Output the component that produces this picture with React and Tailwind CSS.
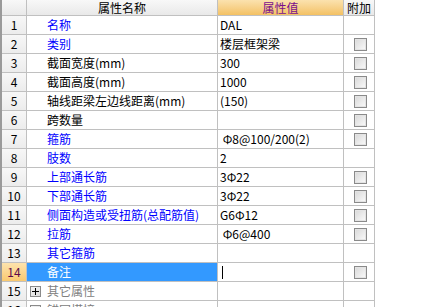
import React from "react";

const rows = [
  { n: "1", name: "名称", c: "blue", v: "DAL", cb: false },
  { n: "2", name: "类别", c: "blue", v: "楼层框架梁", cb: true },
  { n: "3", name: "截面宽度(mm)", c: "black", v: "300", cb: true },
  { n: "4", name: "截面高度(mm)", c: "black", v: "1000", cb: true },
  { n: "5", name: "轴线距梁左边线距离(mm)", c: "black", v: "(150)", cb: true },
  { n: "6", name: "跨数量", c: "black", v: "", cb: true },
  { n: "7", name: "箍筋", c: "blue", v: " Φ8@100/200(2)", cb: true },
  { n: "8", name: "肢数", c: "blue", v: "2", cb: false },
  { n: "9", name: "上部通长筋", c: "blue", v: "3Φ22", cb: true },
  { n: "10", name: "下部通长筋", c: "blue", v: "3Φ22", cb: true },
  { n: "11", name: "侧面构造或受扭筋(总配筋值)", c: "blue", v: "G6Φ12", cb: true },
  { n: "12", name: "拉筋", c: "blue", v: " Φ6@400", cb: true },
  { n: "13", name: "其它箍筋", c: "blue", v: "", cb: false },
  { n: "14", name: "备注", c: "sel", v: "", cb: true, sel: true },
  { n: "15", name: "其它属性", c: "gray", v: "", cb: false, exp: true },
  { n: "16", name: "锚固搭接", c: "gray", v: "", cb: false, exp: true },
];

function Checkbox() {
  return (
    <div className="w-[13px] h-[13px] border border-[#8a8a8a] bg-gradient-to-br from-[#d8d8d8] to-[#fbfbfb] shadow-[inset_0_0_0_1px_#e4e4e4]" />
  );
}

function Expander() {
  return (
    <div className="w-[11px] h-[11px] border border-[#8a8a8a] bg-gradient-to-br from-[#f4f4f4] to-[#dcdcdc] flex items-center justify-center">
      <div className="relative w-[7px] h-[7px]">
        <div className="absolute left-0 top-[3px] w-[7px] h-[1px] bg-black" />
        <div className="absolute left-[3px] top-0 w-[1px] h-[7px] bg-black" />
      </div>
    </div>
  );
}

export default function App() {
  return (
    <div
      className="w-[421px] h-[307px] overflow-hidden bg-white text-[12px] leading-none text-black"
      style={{ fontFamily: '"Noto Sans CJK SC", "DejaVu Sans", sans-serif' }}
    >
      <div className="w-[375px] border-l-2 border-[#9a9a9a]">
        {/* header */}
        <div className="flex h-[16px]">
          <div className="w-[25px] h-full border-r border-b border-[#c0c0c0] bg-gradient-to-b from-[#f8f8f8] to-[#e9e9e9]" />
          <div className="w-[191px] h-full border-r border-b border-[#c0c0c0] bg-gradient-to-b from-[#f8f8f8] to-[#e9e9e9] flex items-center justify-center">
            <span>属性名称</span>
          </div>
          <div className="w-[126px] h-full border-r border-b border-[#c0c0c0] bg-gradient-to-b from-[#fbe2ae] to-[#f3c163] flex items-center justify-center text-[#7a0f8c]">
            <span>属性值</span>
          </div>
          <div className="w-[31px] h-full border-r border-b border-[#c0c0c0] bg-gradient-to-b from-[#f8f8f8] to-[#e9e9e9] flex items-center justify-center">
            <span>附加</span>
          </div>
        </div>
        {rows.map((r) => {
          const nameColor =
            r.c === "blue"
              ? "text-[#0000ff]"
              : r.c === "gray"
              ? "text-[#808080]"
              : r.c === "sel"
              ? "text-white"
              : "text-black";
          return (
            <div key={r.n} className="flex h-[19px]">
              <div
                className={
                  r.sel
                    ? "w-[25px] h-full border-r border-b border-[#c0c0c0] bg-gradient-to-b from-[#fde3ad] to-[#f9c96f] flex items-center justify-center text-[#5a0a4a]"
                    : "w-[25px] h-full border-r border-b border-[#c0c0c0] bg-gradient-to-b from-[#f7f7f7] to-[#ececec] flex items-center justify-center"
                }
              >
                {r.n}
              </div>
              <div
                className={
                  (r.sel ? "bg-[#3399ff] " : "") +
                  "w-[191px] h-full border-r border-b border-[#c0c0c0] flex items-center " +
                  nameColor
                }
              >
                {r.exp ? (
                  <div className="w-[20px] pl-[3px] flex items-center">
                    <Expander />
                  </div>
                ) : (
                  <div className="w-[20px]" />
                )}
                <span className="whitespace-pre">{r.name}</span>
              </div>
              <div className="w-[126px] h-full border-r border-b border-[#c0c0c0] flex items-center pl-[2px] whitespace-pre">
                {r.sel ? <div className="w-[1px] h-[13px] bg-black ml-[2px]" /> : r.v}
              </div>
              <div className="w-[31px] h-full border-r border-b border-[#c0c0c0] flex items-center justify-center pl-[2px]">
                {r.cb ? <Checkbox /> : null}
              </div>
            </div>
          );
        })}
      </div>
    </div>
  );
}
